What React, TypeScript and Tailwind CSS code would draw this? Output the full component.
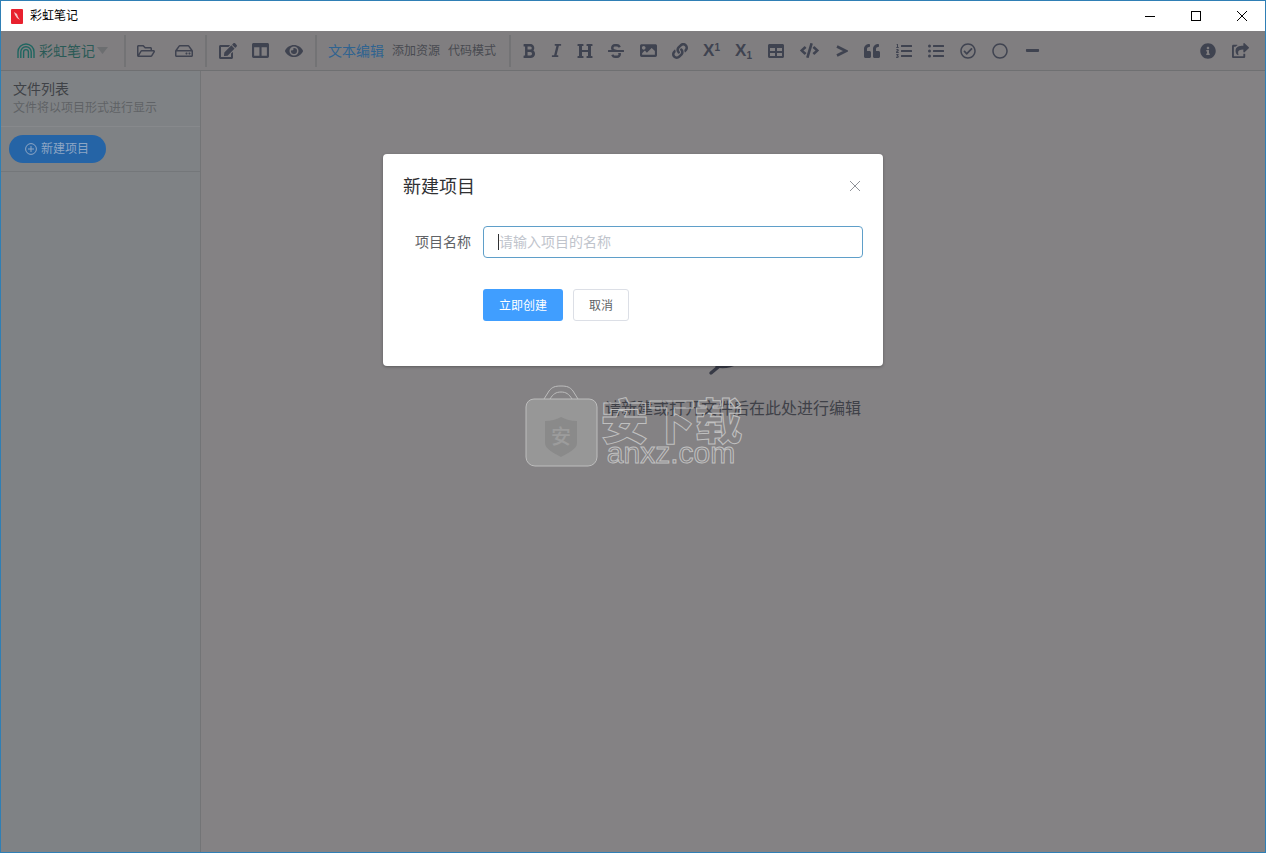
import React from "react";
import {
  FaRegFolderOpen, FaRegHdd, FaEdit, FaColumns, FaEye, FaBold, FaItalic, FaHeading,
  FaStrikethrough, FaImage, FaLink, FaTable, FaCode, FaQuoteLeft, FaListOl, FaListUl,
  FaRegCheckCircle, FaRegCircle, FaMinus, FaInfoCircle, FaShareSquare,
} from "react-icons/fa";

function Sep() {
  return <div className="h-8 w-[2px] shrink-0 bg-[#737375]" />;
}

function Cell({ w, children }: { w: string; children: React.ReactNode }) {
  return <div className={`flex shrink-0 items-center justify-center text-[#3f4350] ${w}`}>{children}</div>;
}

function Logo() {
  return (
    <svg viewBox="0 0 18 15" className="h-[15px] w-[18px]" fill="none" stroke="#1f6660" strokeWidth="1.4">
      <path d="M1 15V9a8 8 0 0 1 16 0v6" />
      <path d="M3.8 15V9a5.2 5.2 0 0 1 10.4 0v6" />
      <path d="M6.6 15V9a2.4 2.4 0 0 1 4.8 0v6" />
    </svg>
  );
}

function Watermark() {
  return (
    <div className="pointer-events-none absolute left-[524px] top-[384px] flex items-start">
      <svg viewBox="0 0 73 82" className="h-[82px] w-[73px]">
        <path d="M19 14l5-8c3-4 6-5 12-5s9 1 12 5l5 8" fill="none" stroke="#bdbdbd" strokeWidth="1" />
        <path d="M25 14c3-5 6-7 11-7s8 2 11 7" fill="none" stroke="#bdbdbd" strokeWidth="1" />
        <path d="M9 14h55a8 8 0 0 1 8 8v50a9 9 0 0 1-9 9H10a9 9 0 0 1-9-9V22a8 8 0 0 1 8-8z" fill="#979797" stroke="#bdbdbd" strokeWidth="1" />
        <path d="M20 36c7 0 12-2 16-4 4 2 9 4 16 4v22c0 6-9 10-16 14-7-4-16-8-16-14z" fill="#8a8a8a" />
        <text x="36" y="59" textAnchor="middle" fontSize="20" fontWeight="500" fill="#9c9c9c" fontFamily="'Noto Sans CJK SC',sans-serif">安</text>
      </svg>
      <div className="ml-[3px] flex w-[140px] flex-col items-center">
        <div className="mt-[8px] text-[48px] font-black leading-[50px] tracking-[-1px] whitespace-nowrap text-transparent [-webkit-text-stroke:1px_#c0c0c0]">安下载</div>
        <div className="mt-[-4px] font-[family-name:'Liberation_Sans',sans-serif] text-[30px] leading-[28px] text-transparent [-webkit-text-stroke:1px_#c0c0c0]">anxz.com</div>
      </div>
    </div>
  );
}

export default function App() {
  return (
    <div className="relative h-[853px] w-[1266px] overflow-hidden border border-[#2f7fb5] bg-white font-[family-name:'Noto_Sans_CJK_SC','Liberation_Sans',sans-serif]">
      {/* Title bar */}
      <div className="flex h-[30px] items-center bg-white">
        <svg viewBox="0 0 12 15" className="ml-[10px] h-[15px] w-[12px]">
          <rect x="0" y="0" width="12" height="15" rx="1" fill="#e8202e" />
          <path d="M3 3l3 2 1 3 2 3-3-2-2-3z" fill="#f6c6c8" />
        </svg>
        <span className="ml-[7px] pb-[2px] text-xs text-black">彩虹笔记</span>
        <div className="ml-auto flex h-full">
          <div className="flex w-[46px] items-center justify-center">
            <svg viewBox="0 0 10 10" className="h-[10px] w-[10px]" stroke="#000" fill="none"><path d="M0 5.5h10" /></svg>
          </div>
          <div className="flex w-[46px] items-center justify-center">
            <svg viewBox="0 0 10 10" className="h-[10px] w-[10px]" stroke="#000" fill="none"><rect x=".5" y=".5" width="9" height="9" /></svg>
          </div>
          <div className="flex w-[46px] items-center justify-center">
            <svg viewBox="0 0 10 10" className="h-[10px] w-[10px]" stroke="#000" fill="none"><path d="M0 0l10 10M10 0L0 10" /></svg>
          </div>
        </div>
      </div>

      {/* Toolbar */}
      <div className="flex h-[40px] items-center border-b border-[#6f7072] bg-[#807e80]">
        <div className="flex w-[123px] shrink-0 items-center pl-4">
          <Logo />
          <span className="ml-1 pb-[2px] text-sm text-[#2a5a56]">彩虹笔记</span>
          <svg viewBox="0 0 11 7" className="ml-[2px] h-[7px] w-[11px]"><path d="M0 0h11L5.5 7z" fill="#6c6e70" /></svg>
        </div>
        <Sep />
        <div className="flex w-[79px] shrink-0 pl-[1px]">
          <Cell w="w-[38px]"><FaRegFolderOpen size={18} /></Cell>
          <Cell w="w-[38px]"><FaRegHdd size={18} /></Cell>
        </div>
        <Sep />
        <div className="flex w-[108px] shrink-0 pl-[5px]">
          <Cell w="w-[32px]"><FaEdit size={18} /></Cell>
          <Cell w="w-[33px]"><FaColumns size={17} /></Cell>
          <Cell w="w-[33px]"><FaEye size={18} /></Cell>
        </div>
        <Sep />
        <div className="flex w-[192px] shrink-0 items-center pb-[2px] pl-[11px] whitespace-nowrap">
          <span className="text-sm text-[#2f6390]">文本编辑</span>
          <span className="ml-2 text-xs text-[#484a50]">添加资源</span>
          <span className="ml-2 text-xs text-[#484a50]">代码模式</span>
        </div>
        <Sep />
        <div className="flex items-center pl-[3px]">
          <Cell w="w-[29px]"><FaBold size={16} /></Cell>
          <Cell w="w-[27px]"><FaItalic size={15} /></Cell>
          <Cell w="w-[30px]"><FaHeading size={16} /></Cell>
          <Cell w="w-[32px]"><FaStrikethrough size={16} /></Cell>
          <Cell w="w-[32px]"><FaImage size={17} /></Cell>
          <Cell w="w-[32px]"><FaLink size={16} /></Cell>
          <Cell w="w-[31px]"><span className="font-[family-name:'Liberation_Sans',sans-serif] text-[17px] font-bold leading-none">X<sup className="text-[10px] leading-none">1</sup></span></Cell>
          <Cell w="w-[33px]"><span className="font-[family-name:'Liberation_Sans',sans-serif] text-[17px] font-bold leading-none">X<sub className="text-[10px] leading-none">1</sub></span></Cell>
          <Cell w="w-[32px]"><FaTable size={16} /></Cell>
          <Cell w="w-[34px]"><FaCode size={19} /></Cell>
          <Cell w="w-[32px]">
            <svg viewBox="0 0 12 12" className="h-[12px] w-[12px]" fill="none" stroke="currentColor" strokeWidth="2.6"><path d="M1 1.5L10 6l-9 4.5" /></svg>
          </Cell>
          <Cell w="w-[28px]"><FaQuoteLeft size={16} /></Cell>
          <Cell w="w-[36px]"><FaListOl size={16} /></Cell>
          <Cell w="w-[28px]"><FaListUl size={16} /></Cell>
          <Cell w="w-[36px]"><FaRegCheckCircle size={16} /></Cell>
          <Cell w="w-[28px]"><FaRegCircle size={16} /></Cell>
          <Cell w="w-[36px]"><FaMinus size={15} /></Cell>
        </div>
        <div className="ml-auto flex pr-[9px]">
          <Cell w="w-[32px]"><FaInfoCircle size={16} /></Cell>
          <Cell w="w-[32px]"><FaShareSquare size={17} /></Cell>
        </div>
      </div>

      {/* Body */}
      <div className="flex h-[781px]">
        <aside className="w-[200px] shrink-0 border-r border-[#737476] bg-[#7f8285]">
          <div className="h-[56px] border-b border-[#87898c] pl-3 pt-[7px]">
            <div className="text-sm leading-5 text-[#3f4247]">文件列表</div>
            <div className="text-xs leading-[18px] text-[#5f6266]">文件将以项目形式进行显示</div>
          </div>
          <div className="flex h-[45px] items-center border-b border-[#74777a] pl-2">
            <div className="flex h-7 w-[97px] items-center rounded-full bg-[#2564a6] pl-4 text-xs text-[#8ea6c4]">
              <svg viewBox="0 0 12 12" className="h-3 w-3" fill="none" stroke="currentColor"><circle cx="6" cy="6" r="5.4" /><path d="M6 3v6M3 6h6" /></svg>
              <span className="ml-1 pb-[2px]">新建项目</span>
            </div>
          </div>
        </aside>
        <main className="flex flex-1 flex-col items-center bg-[#848284] pt-[241px]">
          <svg viewBox="0 0 64 64" className="h-16 w-16" fill="none" stroke="#373a46" strokeWidth="3.4" strokeLinecap="round">
            <path d="M10 61L22 51" />
            <path d="M16 54c6 1 14 0 20-3" />
          </svg>
          <div className="mt-[19px] text-base leading-6 text-[#3f4148]">请新建或打开文件后在此处进行编辑</div>
        </main>
      </div>

      <Watermark />

      {/* Dialog */}
      <div className="absolute left-[382px] top-[153px] h-[212px] w-[500px] rounded-sm bg-white shadow-[0_1px_3px_rgba(0,0,0,0.3)]">
        <div className="flex items-center justify-between pl-5 pr-[22px] pt-[19px]">
          <span className="pb-[1px] text-lg leading-6 text-[#303133]">新建项目</span>
          <svg viewBox="0 0 12 12" className="h-3 w-3" fill="none" stroke="#909399"><path d="M1 1l10 10M11 1L1 11" /></svg>
        </div>
        <div className="mt-[28px] flex items-center">
          <label className="w-[88px] pb-[3px] text-right text-sm text-[#606266]">项目名称</label>
          <div className="relative ml-3">
            <input
              placeholder="请输入项目的名称"
              className="h-8 w-[380px] rounded border border-[#5f9fc9] pb-[3px] pl-[15px] text-sm outline-none placeholder:text-[#c0c4cc]"
            />
            <div className="absolute left-[15px] top-[8px] h-4 w-px bg-[#303133]" />
          </div>
        </div>
        <div className="ml-[100px] mt-[31px] flex gap-[10px]">
          <button className="h-8 w-20 rounded-[3px] bg-[#409eff] text-xs text-white">立即创建</button>
          <button className="h-8 w-14 rounded-[3px] border border-[#dcdfe6] bg-white text-xs text-[#606266]">取消</button>
        </div>
      </div>
    </div>
  );
}
